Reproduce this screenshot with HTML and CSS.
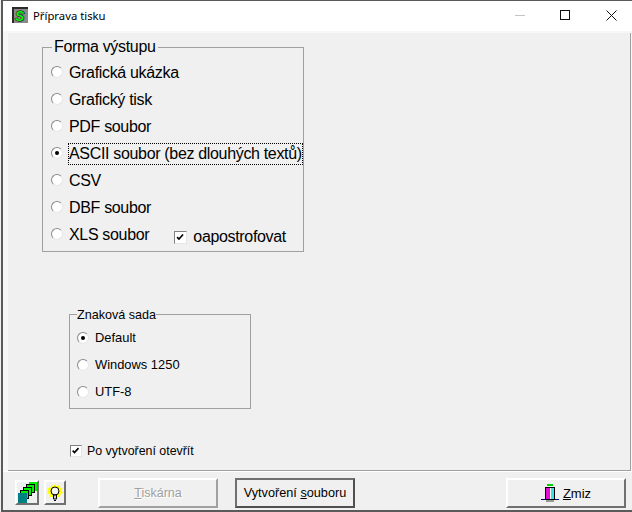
FILE: index.html
```html
<!DOCTYPE html>
<html lang="cs">
<head>
  <meta charset="UTF-8" />
  <title>Příprava tisku</title>
  <link rel="stylesheet" href="styles.css">
</head>
<body>
  <div class="window">
    <div class="titlebar">
      <svg class="app-icon" width="16" height="16" viewBox="0 0 16 16">
        <rect width="16" height="16" fill="#8a8a8a"/>
        <path d="M0 0h16v2H2v14H0z" fill="#2a2a2a"/>
        <text class="app-s" x="3" y="13.5">S</text>
      </svg>
      <span class="title">Příprava tisku</span>
      <div class="controls">
        <span class="ctl-min"></span>
        <span class="ctl-max"></span>
        <svg class="ctl-close" width="11" height="11" viewBox="0 0 11 11"><path d="M.5.5l10 10M10.5.5l-10 10" stroke="#111" stroke-width="1"/></svg>
      </div>
    </div>

    <div class="panel">
      <fieldset class="group group-output">
        <legend>Forma výstupu</legend>
        <div class="radio"><i class="dot"></i>Grafická ukázka</div>
        <div class="radio"><i class="dot"></i>Grafický tisk</div>
        <div class="radio"><i class="dot"></i>PDF soubor</div>
        <div class="radio"><i class="dot on"></i><span class="focused">ASCII soubor (bez dlouhých textů)</span></div>
        <div class="radio"><i class="dot"></i>CSV</div>
        <div class="radio"><i class="dot"></i>DBF soubor</div>
        <div class="radio last">
          <i class="dot"></i><span>XLS soubor</span>
          <label class="check check-big">
            <svg class="box" width="13" height="13" viewBox="0 0 13 13"><path d="M2.5 6l2.2 2.4L9.5 3" fill="none" stroke="#000" stroke-width="2"/></svg>
            <span>oapostrofovat</span>
          </label>
        </div>
      </fieldset>

      <fieldset class="group group-charset">
        <legend>Znaková sada</legend>
        <div class="radio"><i class="dot on"></i>Default</div>
        <div class="radio"><i class="dot"></i>Windows 1250</div>
        <div class="radio"><i class="dot"></i>UTF-8</div>
      </fieldset>

      <label class="check check-open">
        <svg class="box" width="12" height="12" viewBox="0 0 12 12"><path d="M2 5.5l2.2 2.4L9 2.6" fill="none" stroke="#000" stroke-width="2"/></svg>
        <span>Po vytvoření otevřít</span>
      </label>
    </div>

    <div class="toolbar">
      <button class="btn btn-icon">
        <svg width="20" height="21" viewBox="0 0 20 21" shape-rendering="crispEdges">
          <rect x="12" y="0" width="8" height="9" fill="#00f000"/>
          <rect x="9.5" y="2.5" width="8" height="8" fill="#00f000" stroke="#000"/>
          <rect x="6.5" y="5.5" width="8" height="8" fill="#00f000" stroke="#000"/>
          <rect x="3.5" y="8.5" width="8" height="8" fill="#00f000" stroke="#000"/>
          <rect x="1" y="11" width="9" height="10" fill="#008080"/>
        </svg>
      </button>
      <button class="btn btn-tip">
        <svg width="16" height="18" viewBox="0 0 16 18">
          <path d="M8 0l1.6 2.2L12 1l.4 2.8L15.5 4l-1 2.8L16 9l-2.6 1.2L13 13H3l-.4-2.8L0 9l1.5-2.2L.5 4l3.1-.2L4 1l2.4 1.2z" fill="#ff0"/>
          <circle cx="8" cy="7" r="4" fill="#f4f4f4" stroke="#000"/>
          <path d="M6.5 11h3v4h-3z" fill="#ccc" stroke="#000"/>
          <path d="M7 16.5h2" stroke="#000"/>
        </svg>
      </button>
      <button class="btn btn-print" disabled><span><u>T</u>iskárna</span></button>
      <button class="btn btn-create"><span>Vytvoření <u>s</u>ouboru</span></button>
      <button class="btn btn-close">
        <svg width="18" height="18" viewBox="0 0 18 18" shape-rendering="crispEdges">
          <rect x="6" y="0" width="6" height="2" fill="#00d000"/>
          <path d="M4.5 3.5h9v12h-9z" fill="#fff" stroke="#000"/>
          <rect x="5" y="4" width="4" height="11" fill="#e010d0"/>
          <rect x="10" y="4" width="3" height="11" fill="#40e0e0"/>
          <path d="M0 15.5h4M14 15.5h4" stroke="#000080"/>
          <rect x="5" y="16" width="8" height="2" fill="#999"/>
        </svg>
        <span><u>Z</u>miz</span>
      </button>
    </div>
  </div>
</body>
</html>
```

FILE: styles.css
```css
* {
  box-sizing: border-box;
}

html, body {
  margin: 0;
  padding: 0;
  height: 100%;
  overflow: hidden;
}

body {
  background: #f0f0f0;
  font-family: "Liberation Sans", Arial, sans-serif;
  color: #000;
}

.window {
  height: 512px;
  margin-left: 1px;
  display: flex;
  flex-direction: column;
  border-left: 2px solid #5a5a5a;
  border-top: 1px solid #5a5a5a;
  border-bottom: 2px solid #5a5a5a;
  background: #f7f7f7;
}

.titlebar {
  height: 30px;
  flex: none;
  display: flex;
  align-items: center;
  padding: 0 0 2px 9px;
  background: #fff;
}

.app-s {
  font-family: "Liberation Sans", sans-serif;
  font-size: 14px;
  font-weight: bold;
  font-style: italic;
  fill: #10f010;
  stroke: #000;
  stroke-width: 1px;
  paint-order: stroke;
}

.title {
  margin-left: 5px;
  font-family: "Noto Sans", sans-serif;
  font-size: 11.3px;
  color: #000;
}

.controls {
  margin-left: auto;
  display: flex;
  align-items: center;
  padding-right: 15px;
}

.ctl-min {
  width: 10px;
  height: 1px;
  background: #c4c4c4;
}

.ctl-max {
  width: 10px;
  height: 10px;
  margin-left: 35px;
  border: 1px solid #111;
}

.ctl-close {
  margin-left: 36px;
}

.panel {
  height: 438px;
  flex: none;
  margin: 2px 1px 0 5px;
  padding: 0 0 0 34px;
  background: #f0f0f0;
  border-right: 1px solid #a0a0a0;
  border-bottom: 1px solid #a0a0a0;
  display: flex;
  flex-direction: column;
  align-items: flex-start;
}

.group {
  margin: 0;
  border: 1px solid #a0a0a0;
  min-width: 0;
}

.group-output {
  width: 262px;
  height: 214px;
  margin-top: 5px;
  padding: 0 0 0 8px;
  font-size: 16px;
  letter-spacing: -.33px;
}

.group-output legend {
  margin-left: 1px;
  line-height: 18px;
  padding: 0 2px;
}

.group-output .radio {
  height: 27px;
}

.group-output .radio:first-of-type {
  margin-top: 3px;
}

.group-output .dot {
  margin-bottom: 2px;
}

.group-charset {
  width: 182px;
  height: 96px;
  margin: 61px 0 0 27px;
  padding: 0 0 0 7px;
  font-size: 12.9px;
}

.group-charset legend {
  margin-left: 0;
  padding: 2px 0 0;
  font-size: 12.6px;
  line-height: 1px;
}

.group-charset .radio {
  height: 27px;
}

.group-charset .radio:first-of-type {
  margin-top: 8px;
}

.group-charset .radio .dot {
  margin-right: 6px;
}

.radio {
  display: flex;
  align-items: center;
  white-space: nowrap;
}

.dot {
  position: relative;
  flex: none;
  width: 12px;
  height: 12px;
  margin-right: 6px;
  border-radius: 50%;
  background: #fff;
  border: 1px solid;
  border-color: #8a8a8a #e6e6e6 #e6e6e6 #8a8a8a;
}

.dot.on::after {
  content: "";
  position: absolute;
  left: 3px;
  top: 3px;
  width: 4px;
  height: 4px;
  border-radius: 50%;
  background: #000;
}

.focused {
  outline: 1px dotted #000;
  line-height: 20px;
}

.check {
  display: flex;
  align-items: center;
  white-space: nowrap;
}

.box {
  flex: none;
  background: #fff;
  border: 1px solid;
  border-color: #808080 #e6e6e6 #e6e6e6 #808080;
}

.check-big {
  margin-left: 25px;
  margin-top: 5px;
  gap: 6px;
}

.check-open {
  margin: 35px 0 0 28px;
  font-size: 12.4px;
  gap: 5px;
}

.toolbar {
  flex: none;
  flex-grow: 1;
  display: flex;
  align-items: flex-start;
  padding: 6px 0 0 12px;
  border-top: 1px solid #fff;
  background: #f0f0f0;
}

.btn {
  height: 30px;
  padding: 0;
  font-family: inherit;
  font-size: 12.5px;
  color: #000;
  background: #f0f0f0;
  border: 2px solid;
  border-color: #fff #707070 #707070 #fff;
  display: flex;
  align-items: center;
  justify-content: center;
}

.btn-icon {
  width: 24px;
  height: 25px;
  margin-top: 2px;
}

.btn-tip {
  width: 22px;
  height: 25px;
  margin: 2px 0 0 5px;
}

.btn-print {
  width: 120px;
  margin-left: 32px;
  color: #a0a0a0;
  text-shadow: 1px 1px #fff;
  border-color: #fff #a0a0a0 #a0a0a0 #fff;
}

.btn-create {
  width: 120px;
  margin-left: 17px;
  font-size: 12.7px;
  border-color: #707070 #505050 #505050 #707070;
}

.btn-close {
  width: 120px;
  margin-left: 151px;
  gap: 4px;
  font-size: 13px;
}
```
